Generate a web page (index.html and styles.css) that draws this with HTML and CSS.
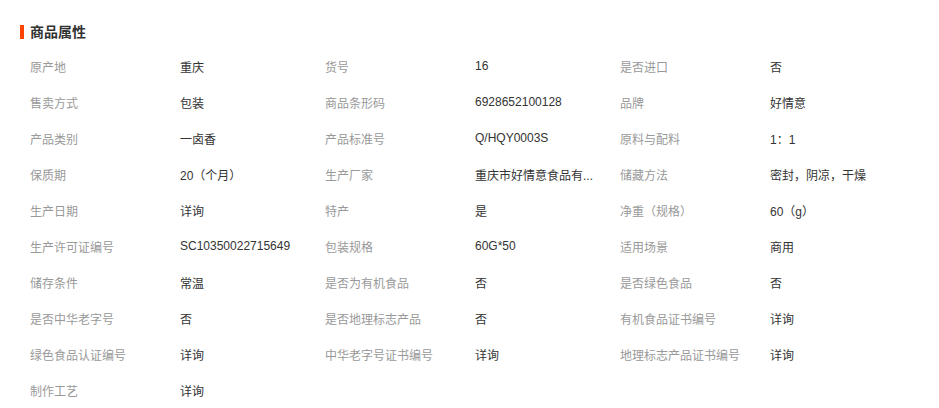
FILE: index.html
```html
<!DOCTYPE html>
<html lang="zh-CN">
<head>
    <meta charset="UTF-8">
    <title>商品属性</title>
    <link rel="stylesheet" href="styles.css">
</head>
<body>
    <div class="attrs">
        <h3 class="attrs-title">商品属性</h3>
        <ul class="attrs-list">
            <li><span class="label">原产地</span><span class="value">重庆</span></li>
            <li><span class="label">货号</span><span class="value">16</span></li>
            <li><span class="label">是否进口</span><span class="value">否</span></li>
            <li><span class="label">售卖方式</span><span class="value">包装</span></li>
            <li><span class="label">商品条形码</span><span class="value">6928652100128</span></li>
            <li><span class="label">品牌</span><span class="value">好情意</span></li>
            <li><span class="label">产品类别</span><span class="value">一卤香</span></li>
            <li><span class="label">产品标准号</span><span class="value">Q/HQY0003S</span></li>
            <li><span class="label">原料与配料</span><span class="value">1：1</span></li>
            <li><span class="label">保质期</span><span class="value">20（个月）</span></li>
            <li><span class="label">生产厂家</span><span class="value" title="重庆市好情意食品有限公司">重庆市好情意食品有...</span></li>
            <li><span class="label">储藏方法</span><span class="value">密封，阴凉，干燥</span></li>
            <li><span class="label">生产日期</span><span class="value">详询</span></li>
            <li><span class="label">特产</span><span class="value">是</span></li>
            <li><span class="label">净重（规格）</span><span class="value">60（g）</span></li>
            <li><span class="label">生产许可证编号</span><span class="value">SC10350022715649</span></li>
            <li><span class="label">包装规格</span><span class="value">60G*50</span></li>
            <li><span class="label">适用场景</span><span class="value">商用</span></li>
            <li><span class="label">储存条件</span><span class="value">常温</span></li>
            <li><span class="label">是否为有机食品</span><span class="value">否</span></li>
            <li><span class="label">是否绿色食品</span><span class="value">否</span></li>
            <li><span class="label">是否中华老字号</span><span class="value">否</span></li>
            <li><span class="label">是否地理标志产品</span><span class="value">否</span></li>
            <li><span class="label">有机食品证书编号</span><span class="value">详询</span></li>
            <li><span class="label">绿色食品认证编号</span><span class="value">详询</span></li>
            <li><span class="label">中华老字号证书编号</span><span class="value">详询</span></li>
            <li><span class="label">地理标志产品证书编号</span><span class="value">详询</span></li>
            <li><span class="label">制作工艺</span><span class="value">详询</span></li>
        </ul>
    </div>
</body>
</html>
```

FILE: styles.css
```css
body { margin: 0; background: #fff; font-family: Tahoma, "Liberation Sans", "Noto Sans CJK SC", sans-serif; font-size: 12px; }
.attrs { padding: 25px 0 0 20px; }
.attrs-title {
    margin: 0; padding-left: 6px; border-left: 4px solid #ff4400;
    font-size: 14px; font-weight: bold; color: #333; line-height: 14px;
}
.attrs-list {
    list-style: none; margin: 9px 0 0 10px; padding: 0;
    display: grid; grid-template-columns: repeat(3, 295px);
}
.attrs-list li { display: flex; height: 36px; align-items: center; }
.label { width: 150px; color: #999; flex: none; }
.value { color: #333; white-space: nowrap; }
```
